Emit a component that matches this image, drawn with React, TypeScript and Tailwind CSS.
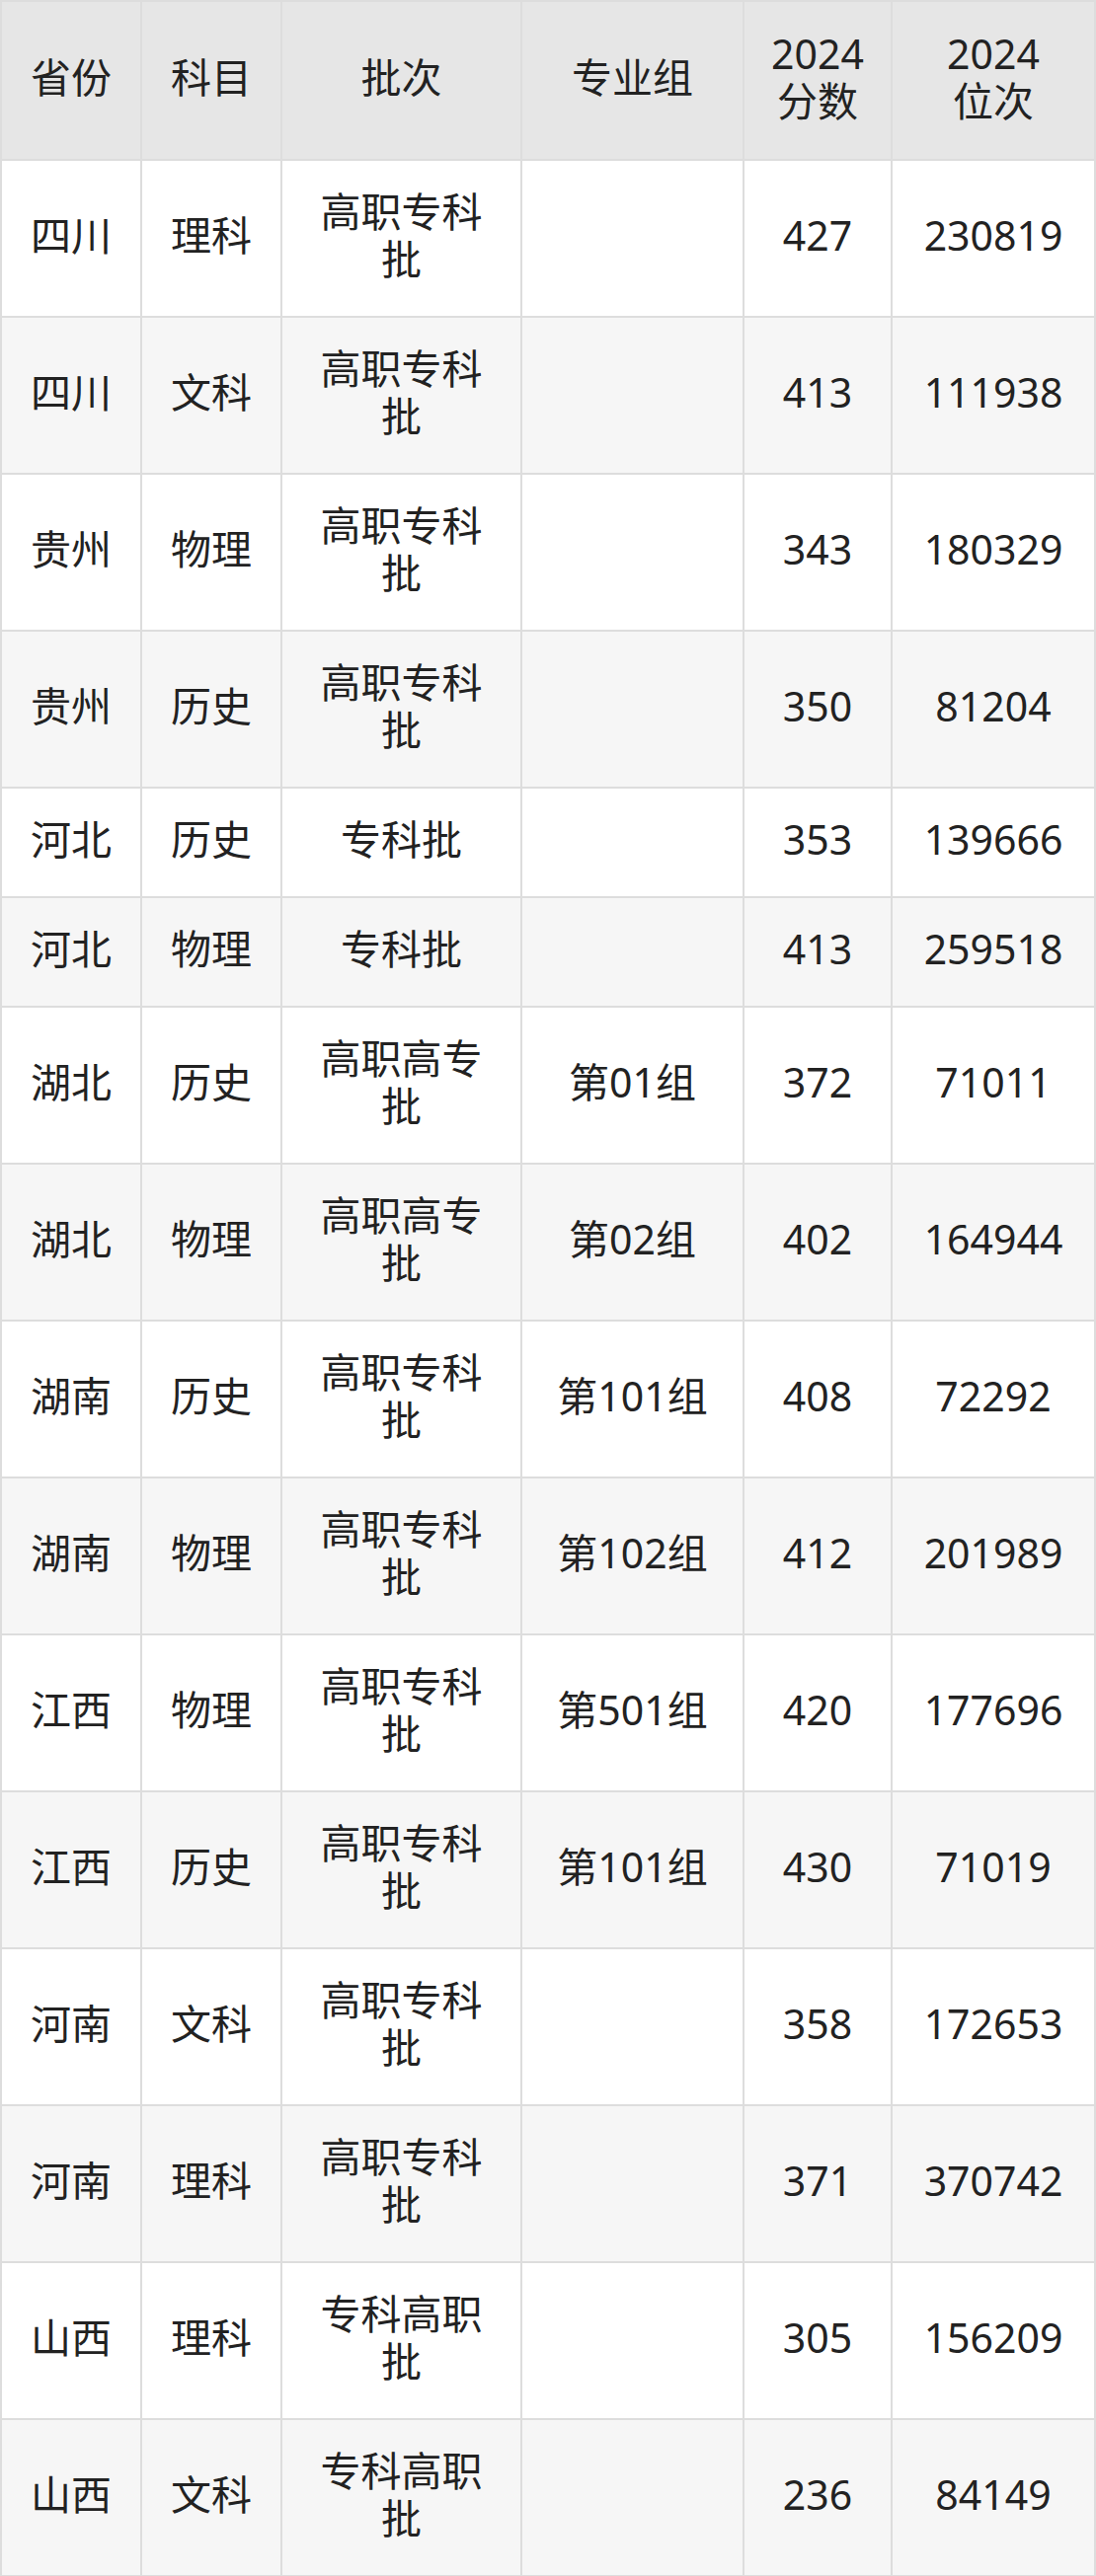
type Row = {
  province: string;
  subject: string;
  batch: string;
  group: string;
  score: string;
  rank: string;
};

const rows: Row[] = [
  { province: "四川", subject: "理科", batch: "高职专科批", group: "", score: "427", rank: "230819" },
  { province: "四川", subject: "文科", batch: "高职专科批", group: "", score: "413", rank: "111938" },
  { province: "贵州", subject: "物理", batch: "高职专科批", group: "", score: "343", rank: "180329" },
  { province: "贵州", subject: "历史", batch: "高职专科批", group: "", score: "350", rank: "81204" },
  { province: "河北", subject: "历史", batch: "专科批", group: "", score: "353", rank: "139666" },
  { province: "河北", subject: "物理", batch: "专科批", group: "", score: "413", rank: "259518" },
  { province: "湖北", subject: "历史", batch: "高职高专批", group: "第01组", score: "372", rank: "71011" },
  { province: "湖北", subject: "物理", batch: "高职高专批", group: "第02组", score: "402", rank: "164944" },
  { province: "湖南", subject: "历史", batch: "高职专科批", group: "第101组", score: "408", rank: "72292" },
  { province: "湖南", subject: "物理", batch: "高职专科批", group: "第102组", score: "412", rank: "201989" },
  { province: "江西", subject: "物理", batch: "高职专科批", group: "第501组", score: "420", rank: "177696" },
  { province: "江西", subject: "历史", batch: "高职专科批", group: "第101组", score: "430", rank: "71019" },
  { province: "河南", subject: "文科", batch: "高职专科批", group: "", score: "358", rank: "172653" },
  { province: "河南", subject: "理科", batch: "高职专科批", group: "", score: "371", rank: "370742" },
  { province: "山西", subject: "理科", batch: "专科高职批", group: "", score: "305", rank: "156209" },
  { province: "山西", subject: "文科", batch: "专科高职批", group: "", score: "236", rank: "84149" },
];

const cell = "border-2 border-[#dddddd] px-5 pt-0 pb-[7px] text-center align-middle";

export default function App() {
  return (
    <div
      className="w-[1110px] bg-white text-[#222222] text-[41px] leading-[48px]"
      style={{ fontFamily: '"Noto Sans", "Noto Sans CJK SC", sans-serif' }}
    >
      <table className="w-full table-fixed border-collapse">
        <thead>
          <tr className="h-[161px] bg-[#e6e6e6]">
            <th className={`${cell} w-[142px] font-normal`}>省份</th>
            <th className={`${cell} w-[142px] font-normal`}>科目</th>
            <th className={`${cell} w-[243px] font-normal`}>批次</th>
            <th className={`${cell} w-[225px] font-normal`}>专业组</th>
            <th className={`${cell} w-[150px] font-normal`}>
              2024
              <br />
              分数
            </th>
            <th className={`${cell} font-normal`}>
              2024
              <br />
              位次
            </th>
          </tr>
        </thead>
        <tbody>
          {rows.map((r, i) => (
            <tr
              key={i}
              className={`${r.batch.length > 4 ? "h-[159px]" : "h-[111px]"} ${
                i % 2 === 0 ? "bg-white" : "bg-[#f6f6f6]"
              }`}
            >
              <td className={cell}>{r.province}</td>
              <td className={cell}>{r.subject}</td>
              <td className={cell}>{r.batch}</td>
              <td className={cell}>{r.group}</td>
              <td className={cell}>{r.score}</td>
              <td className={cell}>{r.rank}</td>
            </tr>
          ))}
        </tbody>
      </table>
    </div>
  );
}
